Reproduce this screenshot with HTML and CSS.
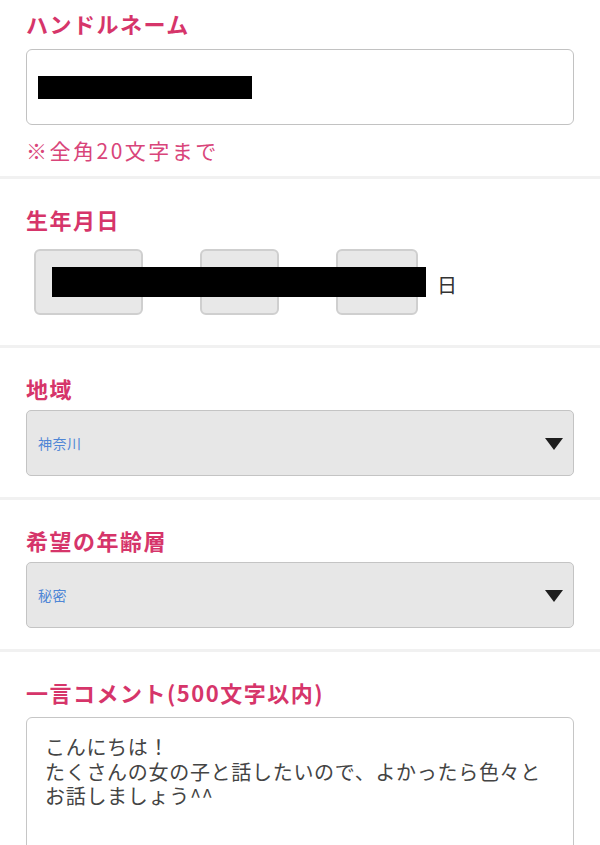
FILE: index.html
```html
<!DOCTYPE html>
<html lang="ja">
<head>
<meta charset="utf-8">
<link rel="stylesheet" href="styles.css">
</head>
<body>
<div class="form">
  <section class="sec sec-first">
    <h2 class="label">ハンドルネーム</h2>
    <div class="input"><span class="redact redact-name"></span></div>
    <p class="note">※全角20文字まで</p>
  </section>
  <section class="sec sec-birth">
    <h2 class="label">生年月日</h2>
    <div class="date-row">
      <div class="date-box box-year"></div>
      <span class="date-unit">年</span>
      <div class="date-box box-month"></div>
      <span class="date-unit">月</span>
      <div class="date-box box-day"></div>
      <span class="date-unit">日</span>
      <span class="redact redact-date"></span>
    </div>
  </section>
  <section class="sec sec-select">
    <h2 class="label">地域</h2>
    <div class="select"><span class="select-value">神奈川</span><span class="caret"></span></div>
  </section>
  <section class="sec sec-select">
    <h2 class="label">希望の年齢層</h2>
    <div class="select"><span class="select-value">秘密</span><span class="caret"></span></div>
  </section>
  <section class="sec sec-comment">
    <h2 class="label">一言コメント(500文字以内)</h2>
    <div class="textarea">こんにちは！<br>たくさんの女の子と話したいので、よかったら色々と<br>お話しましょう^^</div>
  </section>
</div>
</body>
</html>
```
FILE: styles.css
```css
html, body {
  margin: 0;
  padding: 0;
  background: #ffffff;
}
body {
  font-family: "Noto Sans CJK JP", "Noto Sans", sans-serif;
  width: 600px;
  overflow: hidden;
}
.form {
  display: flex;
  flex-direction: column;
}
.sec {
  padding: 27px 26px 21px;
  border-bottom: 3px solid #f1f1f1;
}
.sec-first {
  padding-top: 10px;
  padding-bottom: 13px;
}
.sec-birth {
  padding-bottom: 30px;
}
.sec-comment {
  border-bottom: none;
  padding-bottom: 40px;
}
.label {
  margin: 0 0 9px;
  font-size: 22px;
  line-height: 26px;
  font-weight: 700;
  letter-spacing: 1.5px;
  color: #d6356a;
}
.sec-first .label { margin-bottom: 13px; }
.sec-birth .label { margin-bottom: 17px; }
.sec-comment .label { margin-bottom: 12px; }
.input {
  box-sizing: border-box;
  height: 76px;
  border: 1.5px solid #c2c2c2;
  border-radius: 6px;
  background: #fff;
  display: flex;
  align-items: center;
  padding-left: 11px;
}
.redact {
  background: #000;
  display: block;
}
.redact-name {
  width: 214px;
  height: 23px;
  margin-top: 1px;
}
.note {
  margin: 12px 0 0;
  font-size: 21px;
  line-height: 26px;
  letter-spacing: 2.5px;
  color: #d9457a;
}
.date-row {
  position: relative;
  display: flex;
  align-items: center;
  margin-left: 8px;
  height: 66px;
}
.date-box {
  box-sizing: border-box;
  height: 66px;
  background: #e8e8e8;
  border: 2px solid #cfcfcf;
  border-radius: 6px;
}
.box-year { width: 109px; }
.box-month { width: 79px; }
.box-day { width: 82px; }
.date-unit {
  font-size: 20px;
  color: #333;
  width: 20px;
  margin: 6px 18px 0 19px;
  line-height: 1;
}
.date-unit:last-of-type {
  margin-left: 20px;
  margin-top: 8px;
}
.redact-date {
  position: absolute;
  left: 18px;
  top: 18px;
  width: 374px;
  height: 30px;
}
.select {
  box-sizing: border-box;
  height: 66px;
  background: #e7e7e7;
  border: 1.5px solid #c4c4c4;
  border-radius: 5px;
  display: flex;
  align-items: center;
  justify-content: space-between;
  padding: 0 10px 0 11px;
}
.select-value {
  font-size: 14px;
  color: #4f86d6;
  letter-spacing: 0.5px;
}
.caret {
  width: 0;
  height: 0;
  border-left: 9px solid transparent;
  border-right: 9px solid transparent;
  border-top: 12px solid #1e1e1e;
  margin-top: 2px;
}
.textarea {
  box-sizing: border-box;
  min-height: 180px;
  border: 1.5px solid #c6c6c6;
  border-radius: 6px;
  background: #fff;
  padding: 17px 18px;
  font-size: 20px;
  line-height: 24.5px;
  letter-spacing: 0.7px;
  color: #444;
}
```
